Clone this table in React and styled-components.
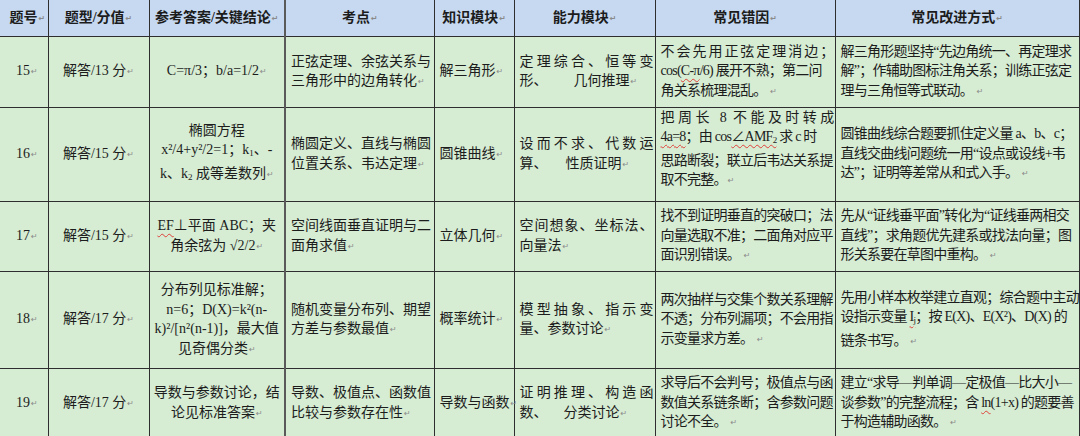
import React from "react";
import styled, { createGlobalStyle } from "styled-components";

const GlobalStyle = createGlobalStyle`
  html, body {
    margin: 0;
    padding: 0;
    background: #ffffff;
  }
  body {
    overflow: hidden;
  }
`;

const Page = styled.div`
  width: 1080px;
  height: 436px;
  overflow: hidden;
  background: #ffffff;
`;

const Table = styled.table`
  border-collapse: collapse;
  table-layout: fixed;
  width: 1079px;
  font-family: "Liberation Serif", "Noto Sans CJK SC", serif;
  font-size: 14px;
  line-height: 19.5px;
  color: #1c1c1c;
`;

const HeadRow = styled.tr`
  height: 36px;
`;

const HeadCell = styled.th`
  box-sizing: border-box;
  width: ${props => props.$w}px;
  background: #c6d9f1;
  border: 1px solid #2e2e2e;
  border-top: none;
  font-weight: 700;
  font-size: 14px;
  text-align: center;
  vertical-align: middle;
  padding: 0;
  white-space: nowrap;
  overflow: hidden;
  &:first-child {
    border-left: none;
    padding-left: 7px;
  }
  &:nth-child(4) {
    border-left: 2px solid #5a5a5a;
  }
`;

const Row = styled.tr`
  height: ${props => props.$h}px;
`;

const Cell = styled.td`
  box-sizing: border-box;
  background: #d6ecd3;
  border: 1px solid #2e2e2e;
  padding: 0 1px 0 ${props => (props.$align === "center" ? 1 : 5)}px;
  vertical-align: ${props => (props.$top ? "top" : "middle")};
  text-align: ${props => props.$align || "left"};
  letter-spacing: ${props => props.$ls || 0}px;
  &:first-child {
    border-left: none;
    padding-left: 7px;
  }
  &:nth-child(4) {
    border-left: 2px solid #5a5a5a;
  }
`;

const Line = styled.span`
  display: block;
  white-space: ${props => (props.$j ? "normal" : "nowrap")};
  text-align: ${props => (props.$j ? "justify" : "inherit")};
  text-align-last: ${props => (props.$j ? "justify" : "auto")};
`;

const Mark = styled.span`
  font-family: "DejaVu Sans", sans-serif;
  font-size: 8px;
  letter-spacing: 0;
  color: #8a8a8a;
  margin-left: 1px;
  vertical-align: 1px;
`;

const Wavy = styled.span`
  text-decoration: underline wavy #e0403a;
  text-decoration-thickness: 1px;
  text-underline-offset: 3px;
`;

const Sub = styled.span`
  font-size: 9px;
  vertical-align: -2px;
`;

const Gap = styled.span`
  display: inline-block;
  width: ${props => props.$w}px;
`;

const J = c => ({ c, j: true });

const columns = [
  { w: 48, title: "题号" },
  { w: 101, title: "题型/分值" },
  { w: 136, title: "参考答案/关键结论" },
  { w: 149, title: "考点" },
  { w: 80, title: "知识模块" },
  { w: 141, title: "能力模块" },
  { w: 180, title: "常见错因" },
  { w: 244, title: "常见改进方式" }
];

const rows = [
  {
    h: 71,
    no: "15",
    type: "解答/13 分",
    answer: ["C=π/3；b/a=1/2"],
    point: ["正弦定理、余弦关系与", "三角形中的边角转化"],
    module: ["解三角形"],
    ability: [J("定理综合、恒等变"), <>形、<Gap $w={26} />几何推理</>],
    error: [
      J("不会先用正弦定理消边；"),
      <>cos(<Wavy>C-π</Wavy>/6) 展开不熟；第二问</>,
      "角关系梳理混乱。 "
    ],
    fix: [
      "解三角形题坚持“先边角统一、再定理求",
      "解”；作辅助图标注角关系；训练正弦定",
      "理与三角恒等式联动。 "
    ]
  },
  {
    h: 94,
    no: "16",
    type: "解答/15 分",
    answer: [
      "椭圆方程",
      <>x²/4+y²/2=1；k<Sub>1</Sub>、-</>,
      <>k、k<Sub>2</Sub> 成等差数列</>
    ],
    point: ["椭圆定义、直线与椭圆", "位置关系、韦达定理"],
    module: ["圆锥曲线"],
    ability: [J("设而不求、代数运"), <>算、<Gap $w={18} />性质证明</>],
    errorTop: true,
    error: [
      J("把周长 8 不能及时转成"),
      <><Wavy>4a=8</Wavy>；由 cos<Wavy>∠AMF<Sub>2</Sub></Wavy> 求 c 时</>,
      "思路断裂；联立后韦达关系提",
      "取不完整。"
    ],
    fix: [
      "圆锥曲线综合题要抓住定义量 a、b、c；",
      "直线交曲线问题统一用“设点或设线+韦",
      "达”；证明等差常从和式入手。 "
    ]
  },
  {
    h: 70,
    no: "17",
    type: "解答/15 分",
    answer: [<><Wavy>EF</Wavy>⊥平面 ABC；夹</>, "角余弦为 √2/2"],
    point: ["空间线面垂直证明与二", "面角求值"],
    module: ["立体几何"],
    ability: [J("空间想象、坐标法、"), "向量法"],
    error: [
      "找不到证明垂直的突破口；法",
      "向量选取不准；二面角对应平",
      "面识别错误。 "
    ],
    fix: [
      "先从“证线垂平面”转化为“证线垂两相交",
      "直线”；求角题优先建系或找法向量；图",
      "形关系要在草图中重构。 "
    ]
  },
  {
    h: 97,
    no: "18",
    type: "解答/17 分",
    answer: [
      "分布列见标准解；",
      "n=6；D(X)=k²(n-",
      "k)²/[n²(n-1)]，最大值",
      "见奇偶分类"
    ],
    point: ["随机变量分布列、期望", "方差与参数最值"],
    module: ["概率统计"],
    ability: [J("模型抽象、指示变"), "量、参数讨论"],
    error: [
      "两次抽样与交集个数关系理解",
      "不透；分布列漏项；不会用指",
      "示变量求方差。 "
    ],
    fix: [
      "先用小样本枚举建立直观；综合题中主动",
      <>设指示变量 <Wavy>I<Sub>j</Sub></Wavy>；按 E(X)、E(X²)、D(X) 的</>,
      "链条书写。 "
    ]
  },
  {
    h: 70,
    no: "19",
    type: "解答/17 分",
    answer: ["导数与参数讨论，结", "论见标准答案"],
    point: ["导数、极值点、函数值", "比较与参数存在性"],
    module: ["导数与函数"],
    ability: [J("证明推理、构造函"), <>数、<Gap $w={16} />分类讨论</>],
    error: [
      "求导后不会判号；极值点与函",
      "数值关系链条断；含参数问题",
      "讨论不全。 "
    ],
    fix: [
      "建立“求导—判单调—定极值—比大小—",
      <>谈参数”的完整流程；含 <Wavy>ln</Wavy>(1+x) 的题要善</>,
      "于构造辅助函数。 "
    ]
  }
];

const Lines = ({ lines }) =>
  lines.map((line, i) => {
    const item = line && line.j ? line : { c: line, j: false };
    const last = i === lines.length - 1;
    return (
      <Line key={i} $j={item.j}>
        {item.c}
        {last && <Mark>↵</Mark>}
      </Line>
    );
  });

export default function App() {
  return (
    <Page lang="zh-CN">
      <GlobalStyle />
      <Table>
        <thead>
          <HeadRow>
            {columns.map(col => (
              <HeadCell key={col.title} $w={col.w}>
                {col.title}
                <Mark>↵</Mark>
              </HeadCell>
            ))}
          </HeadRow>
        </thead>
        <tbody>
          {rows.map(row => (
            <Row key={row.no} $h={row.h}>
              <Cell $align="center">
                <Lines lines={[row.no]} />
              </Cell>
              <Cell $align="center">
                <Lines lines={[row.type]} />
              </Cell>
              <Cell $align="center">
                <Lines lines={row.answer} />
              </Cell>
              <Cell>
                <Lines lines={row.point} />
              </Cell>
              <Cell>
                <Lines lines={row.module} />
              </Cell>
              <Cell>
                <Lines lines={row.ability} />
              </Cell>
              <Cell $top={row.errorTop} $ls={-0.75}>
                <Lines lines={row.error} />
              </Cell>
              <Cell $ls={-0.75}>
                <Lines lines={row.fix} />
              </Cell>
            </Row>
          ))}
        </tbody>
      </Table>
    </Page>
  );
}
